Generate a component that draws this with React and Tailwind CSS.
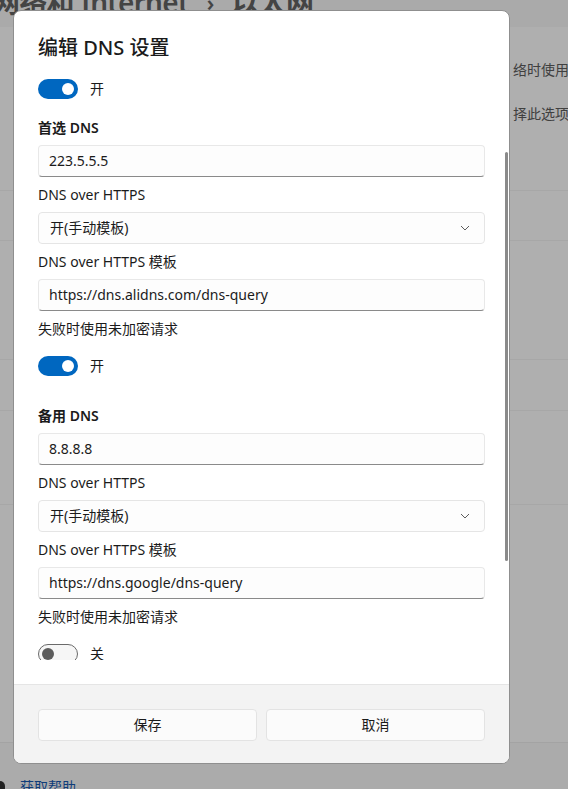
import React from 'react';

const font = { fontFamily: '"Noto Sans", "Noto Sans CJK SC", sans-serif' };

function Toggle({ on, label }) {
  return (
    <div className="flex items-center gap-3 h-5">
      {on ? (
        <div className="w-10 h-5 rounded-full bg-[#0067c0] flex items-center justify-end pr-[4px]">
          <div className="w-3 h-3 rounded-full bg-white" />
        </div>
      ) : (
        <div className="w-10 h-5 rounded-full border border-[#6a6a6a] bg-[#f6f6f6] flex items-center pl-[3px]">
          <div className="w-3 h-3 rounded-full bg-[#5c5c5c]" />
        </div>
      )}
      <span className="text-sm text-[#1b1b1b]">{label}</span>
    </div>
  );
}

function Label({ children, bold }) {
  return (
    <div className={`text-sm leading-5 text-[#1b1b1b] ${bold ? 'font-semibold' : ''}`}>{children}</div>
  );
}

function TextBox({ value }) {
  return (
    <div className="h-8 mt-[7px] rounded-[4px] border border-[#e8e8e8] border-b-[#8a8a8a] bg-[#fdfdfd] flex items-center px-[10px] text-sm text-[#1b1b1b]">
      {value}
    </div>
  );
}

function Select({ value }) {
  return (
    <div className="h-8 mt-[7px] rounded-[4px] border border-[#e5e5e5] bg-[#fdfdfd] flex items-center justify-between pl-[11px] pr-[14px] text-sm text-[#1b1b1b]">
      <span>{value}</span>
      <svg width="10" height="6" viewBox="0 0 10 6" fill="none">
        <path d="M1 1l4 4 4-4" stroke="#5d5d5d" strokeWidth="1" />
      </svg>
    </div>
  );
}

function DnsBlock({ title, ip, template, fallbackOn }) {
  return (
    <div>
      <Label bold>{title}</Label>
      <TextBox value={ip} />
      <div className="mt-2">
        <Label>DNS over HTTPS</Label>
        <Select value="开(手动模板)" />
      </div>
      <div className="mt-2">
        <Label>DNS over HTTPS 模板</Label>
        <TextBox value={template} />
      </div>
      <div className="mt-2">
        <Label>失败时使用未加密请求</Label>
      </div>
      <div className="mt-[17px]">
        <Toggle on={fallbackOn} label={fallbackOn ? '开' : '关'} />
      </div>
    </div>
  );
}

export default function App() {
  return (
    <div className="relative w-[568px] h-[789px] overflow-hidden bg-[#ababab]" style={font}>
      {/* page behind the dialog */}
      <div className="h-[27px] bg-[#aaaaaa] overflow-hidden">
        <div className="mt-[-19px] ml-[-8px] whitespace-nowrap text-[28px] font-semibold text-[#444444] flex items-center gap-[18px] tracking-tight">
          <span>网络和 Internet</span>
          <span className="text-[22px]">›</span>
          <span>以太网</span>
        </div>
      </div>
      <div className="bg-[#afafaf] text-sm text-[#404040] whitespace-nowrap">
        <div className="h-[163px] pt-[33px] pl-[513px]">
          <div className="leading-5">络时使用此设置。</div>
          <div className="leading-5 mt-6">择此选项。 如果</div>
        </div>
        <div className="h-[50px] border-t border-[#a7a7a7]" />
        <div className="h-[119px] border-t border-[#a7a7a7]" />
        <div className="h-[51px] border-t border-[#a7a7a7]" />
        <div className="h-[94px] border-t border-[#a7a7a7]" />
        <div className="h-[238px] border-t border-[#a7a7a7]" />
      </div>
      <div className="border-t border-[#a3a3a3] pt-[34px] pl-[20px] flex items-center gap-2 text-sm text-[#0f3d7a]">
        <span>获取帮助</span>
      </div>
      <div className="absolute left-0 top-[781px] w-[5px] h-3 rounded-r-full bg-[#222]" />

      {/* dialog */}
      <div className="absolute left-[13px] top-[10px] w-[497px] h-[754px] rounded-[8px] bg-white border border-[#8f8f8f] overflow-hidden flex flex-col">
        <div className="relative h-[673px] pb-[24px]">
          <div className="h-[649px] overflow-hidden px-[24px] pt-[23px]">
            <div className="text-xl leading-7 font-medium text-[#1b1b1b]">编辑 DNS 设置</div>
            <div className="mt-[17px]">
              <Toggle on label="开" />
            </div>
            <div className="mt-[19px]">
              <DnsBlock title="首选 DNS" ip="223.5.5.5" template="https://dns.alidns.com/dns-query" fallbackOn />
            </div>
            <div className="mt-[30px]">
              <DnsBlock title="备用 DNS" ip="8.8.8.8" template="https://dns.google/dns-query" fallbackOn={false} />
            </div>
          </div>
          <div className="absolute left-[491px] top-[141px] w-[3px] h-[409px] rounded-full bg-[#8a8a8a]" />
        </div>
        <div className="flex-1 bg-[#f3f3f3] border-t border-[#e5e5e5] px-[24px] pt-[24px] flex gap-[9px]">
          <button className="flex-1 h-8 rounded-[4px] bg-[#fbfbfb] border border-[#e3e3e3] text-sm text-[#1b1b1b]">保存</button>
          <button className="flex-1 h-8 rounded-[4px] bg-[#fbfbfb] border border-[#e3e3e3] text-sm text-[#1b1b1b]">取消</button>
        </div>
      </div>
    </div>
  );
}
